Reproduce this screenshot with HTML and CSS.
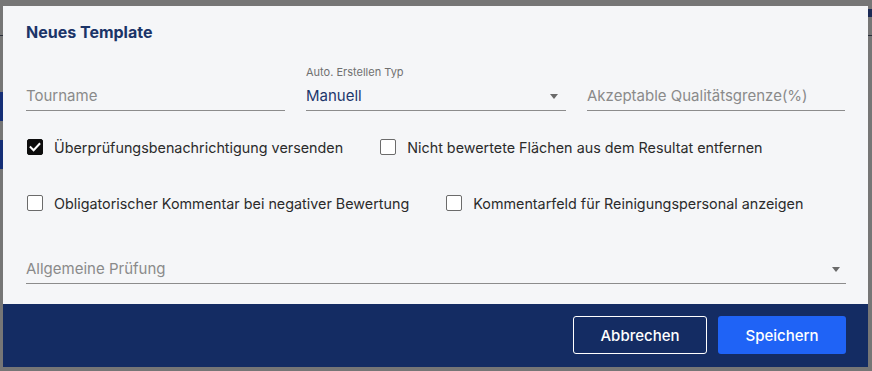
FILE: index.html
```html
<!DOCTYPE html>
<html lang="de">
<head>
<meta charset="utf-8">
<title>Neues Template</title>
<link rel="stylesheet" href="styles.css">
</head>
<body>
<div class="backdrop">
  <div class="under">
    <div class="under-line"></div>
    <div class="under-tag tag-a"></div>
    <div class="under-tag tag-b"></div>
    <div class="under-tag tag-c"></div>
  </div>
  <div class="dialog">
    <div class="dialog-body">
      <h2 class="title">Neues Template</h2>
      <div class="fields">
        <div class="field">
          <div class="field-label">&nbsp;</div>
          <div class="field-input placeholder">Tourname</div>
        </div>
        <div class="field">
          <div class="field-label">Auto. Erstellen Typ</div>
          <div class="field-input value select">Manuell<span class="caret"></span></div>
        </div>
        <div class="field">
          <div class="field-label">&nbsp;</div>
          <div class="field-input placeholder">Akzeptable Qualitätsgrenze(%)</div>
        </div>
      </div>
      <div class="checks">
        <div class="check-row">
          <label class="check"><span class="box checked"><svg viewBox="0 0 16 16" width="16" height="16"><path d="M3.6 8.2l3 3 5.8-6.2" fill="none" stroke="#fff" stroke-width="2" stroke-linecap="square"/></svg></span><span class="check-text">Überprüfungsbenachrichtigung versenden</span></label>
          <label class="check"><span class="box"></span><span class="check-text">Nicht bewertete Flächen aus dem Resultat entfernen</span></label>
        </div>
        <div class="check-row">
          <label class="check"><span class="box"></span><span class="check-text">Obligatorischer Kommentar bei negativer Bewertung</span></label>
          <label class="check"><span class="box"></span><span class="check-text">Kommentarfeld für Reinigungspersonal anzeigen</span></label>
        </div>
      </div>
      <div class="field wide">
        <div class="field-input placeholder select">Allgemeine Prüfung<span class="caret"></span></div>
      </div>
    </div>
    <div class="dialog-footer">
      <button class="btn btn-outline">Abbrechen</button>
      <button class="btn btn-primary">Speichern</button>
    </div>
  </div>
</div>
</body>
</html>
```

FILE: styles.css
```css
* { box-sizing: border-box; }
html, body { margin: 0; padding: 0; }
body {
  width: 872px;
  height: 371px;
  overflow: hidden;
  font-family: Inter, "Noto Sans", sans-serif;
  background: #767676;
}
.backdrop {
  position: relative;
  width: 872px;
  height: 371px;
  background: #767676;
}
.under { position: absolute; inset: 0; }
.under-line {
  position: absolute;
  left: 0; right: 0; top: 35px;
  height: 1px;
  background: #2a2f3a;
}
.under-tag {
  position: absolute;
  left: 0;
  width: 3px;
  background: #152f77;
}
.tag-a { top: 92px; height: 29px; }
.tag-b { top: 140px; height: 29px; }
.tag-c { left: 868px; top: 9px; height: 8px; width: 4px; background: #1b2a55; }

.dialog {
  position: absolute;
  left: 3px;
  top: 6px;
  width: 865px;
  height: 361px;
  background: #f5f6f8;
  display: flex;
  flex-direction: column;
}
.dialog-body {
  flex: 1;
  padding: 16px 22px 0 23px;
  display: flex;
  flex-direction: column;
}
.title {
  margin: 0;
  font-size: 16px;
  line-height: 20px;
  font-weight: 700;
  color: #1b3468;
}
.fields {
  margin-top: 23px;
  display: grid;
  grid-template-columns: 259px 260px 258px;
  column-gap: 21px;
}
.field-label {
  font-size: 11px;
  line-height: 14px;
  color: #707070;
  margin-bottom: 7px;
}
.field-input {
  position: relative;
  font-size: 15px;
  line-height: 20px;
  padding-bottom: 4px;
  border-bottom: 1px solid #8c8c8c;
  white-space: nowrap;
}
.placeholder { color: #8a8a8a; }
.value { color: #1d366c; }
.caret {
  position: absolute;
  right: 8px;
  top: 8px;
  width: 0;
  height: 0;
  border-left: 4.5px solid transparent;
  border-right: 4.5px solid transparent;
  border-top: 5px solid #6a6a6a;
}
.checks {
  margin-top: 26px;
  display: flex;
  flex-direction: column;
  gap: 36px;
}
.check-row {
  display: flex;
  gap: 37px;
  padding-left: 1px;
}
.check {
  display: flex;
  align-items: center;
  gap: 11px;
  height: 20px;
  font-size: 14.35px;
  color: #2b2b2b;
}
.box {
  width: 16px;
  height: 16px;
  border: 1.5px solid #6b6b6b;
  border-radius: 2px;
  background: #fff;
  display: flex;
  align-items: center;
  justify-content: center;
  flex: none;
}
.box.checked {
  background: #0d0d0d;
  border-color: #0d0d0d;
}
.box svg { display: block; flex: none; }
.field.wide {
  margin-top: 46px;
}
.field.wide .caret { right: 6px; }
.dialog-footer {
  height: 63px;
  background: #142c63;
  display: flex;
  justify-content: flex-end;
  align-items: flex-start;
  gap: 11px;
  padding: 12px 22px 0 0;
}
.btn {
  height: 38px;
  border-radius: 3px;
  font-family: Inter, "Noto Sans", sans-serif;
  font-size: 15px;
  font-weight: 500;
  color: #fff;
  cursor: pointer;
}
.btn-outline {
  width: 134px;
  background: transparent;
  border: 1px solid #ffffff;
}
.btn-primary {
  width: 128px;
  background: #1f63f6;
  border: none;
}
```
